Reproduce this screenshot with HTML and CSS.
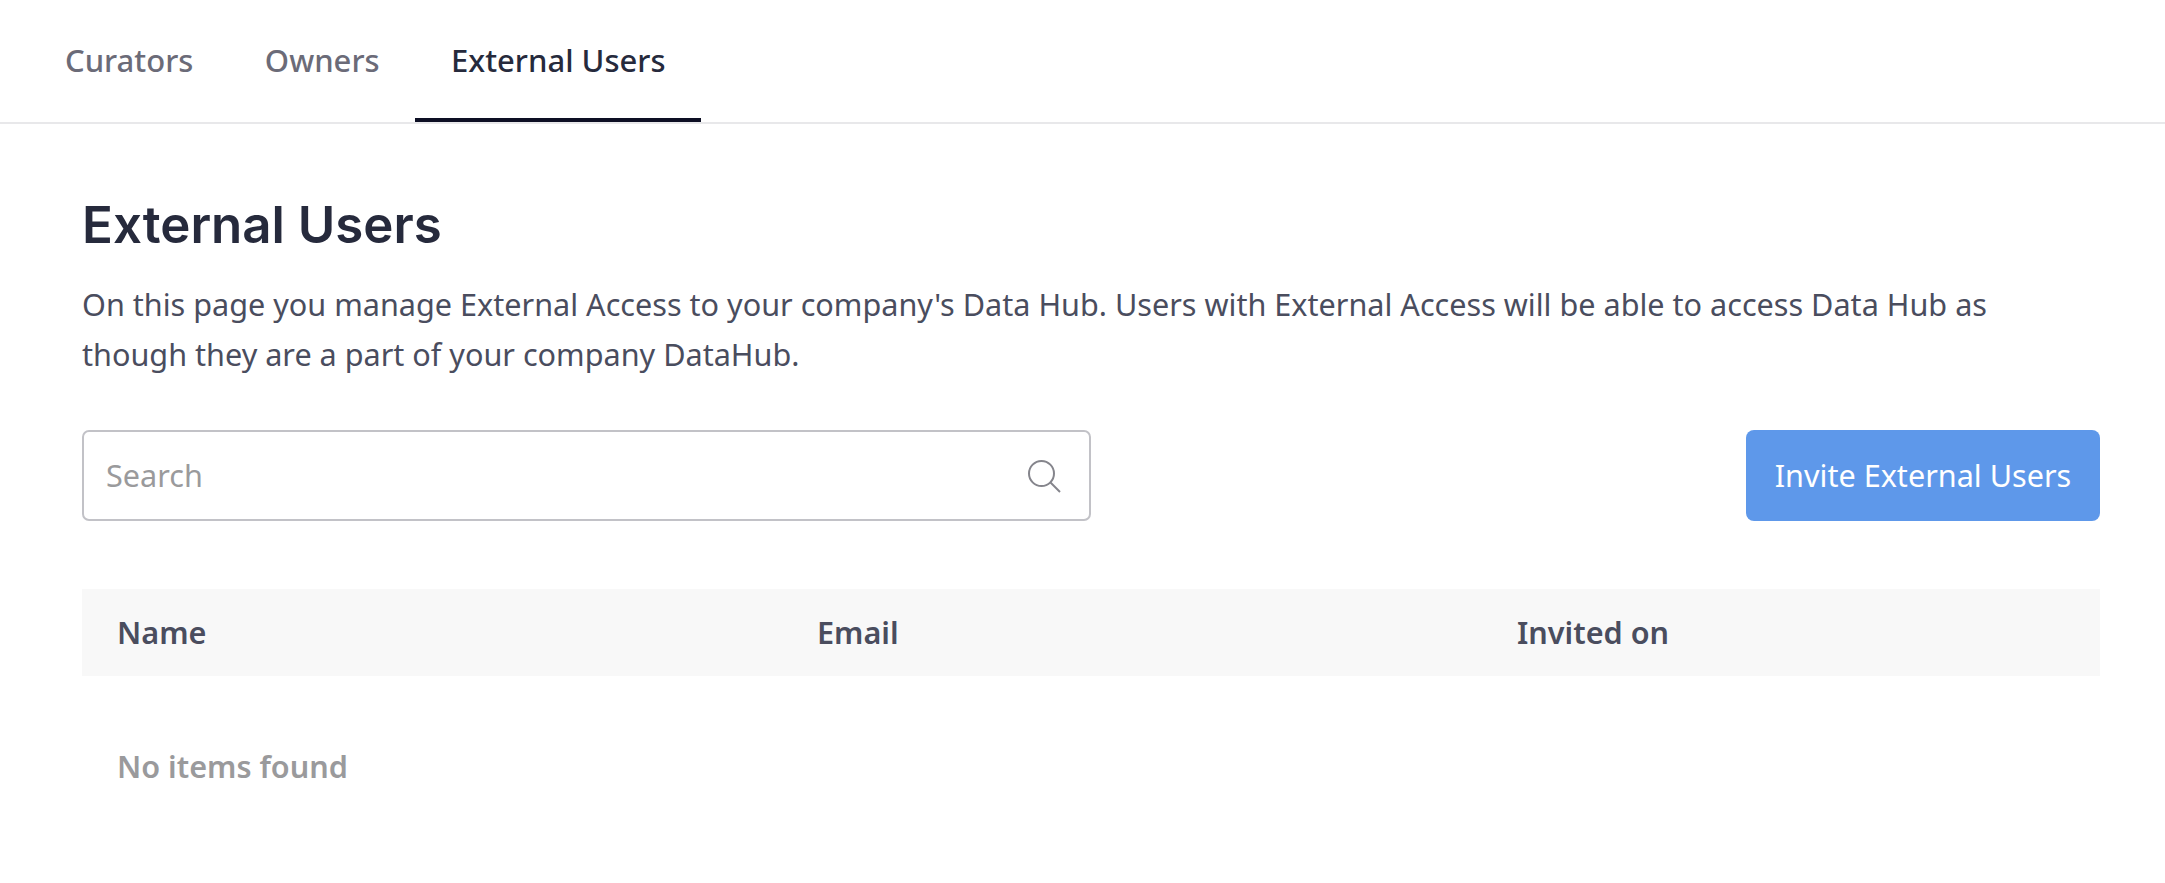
FILE: index.html
```html
<!DOCTYPE html>
<html lang="en">
<head>
   <meta charset="UTF-8">
   <meta name="viewport" content="width=device-width, initial-scale=1.0">
   <title>External Users</title>
   <link rel="stylesheet" href="styles.css">
</head>
<body>
   <!-- Tabs -->
   <nav class="tabs">
       <a class="tab">Curators</a>
       <a class="tab">Owners</a>
       <a class="tab active">External Users</a>
   </nav>
   <main class="content">
       <h1 class="title">External Users</h1>
       <p class="intro">On this page you manage External Access to your company's Data Hub. Users with External Access will be able to access Data Hub as though they are a part of your company DataHub.</p>
       <!-- Search and invite button -->
       <div class="toolbar">
           <div class="search">
               <span class="search-text">Search</span>
               <svg class="search-icon" viewBox="0 0 36 36" fill="none" stroke="#85858c" stroke-width="2">
                   <circle cx="15.5" cy="15.5" r="12.5"/>
                   <path d="M24.5 24.5L34 34"/>
               </svg>
           </div>
           <button class="invite">Invite External Users</button>
       </div>
       <!-- Table -->
       <div class="table-head">
           <div>Name</div>
           <div>Email</div>
           <div>Invited on</div>
       </div>
       <div class="empty">No items found</div>
   </main>
</body>
</html>
```

FILE: styles.css
```css
body {
    margin: 0;
    background-color: #fff;
    font-family: 'Noto Sans', sans-serif;
}

/* tabs across the top */
.tabs {
    display: flex;
    height: 122px;
    padding-left: 29px;
    border-bottom: 2px solid #e8e8ea;
}

.tab {
    padding: 40px 36px 0;
    margin-right: -0.5px;
    font-size: 31px;
    line-height: 40px;
    font-weight: 500;
    color: #6b6b78;
}

.tab.active {
    color: #262a3c;
    border-bottom: 4px solid #0d0f24;
    height: 78px;
}

.content {
    padding: 0 65px 0 82px;
}

.title {
    margin: 73px 0 0;
    font-family: 'Inter', sans-serif;
    font-size: 51px;
    line-height: 56px;
    font-weight: 600;
    color: #262a3c;
}

.intro {
    max-width: 1960px;
    margin: 26px 0 0;
    font-size: 30.6px;
    line-height: 50px;
    color: #4a4d5e;
}

.toolbar {
    display: flex;
    justify-content: space-between;
    align-items: center;
    margin-top: 51px;
}

.search {
    display: flex;
    justify-content: space-between;
    align-items: center;
    box-sizing: border-box;
    width: 1009px;
    height: 91px;
    padding: 0 27px 0 22px;
    border: 2px solid #c2c2c7;
    border-radius: 7px;
}

.search-text {
    padding-bottom: 2px;
    font-size: 30.6px;
    color: #9a9a9c;
}

.search-icon {
    width: 36px;
    height: 36px;
}

.invite {
    width: 354px;
    height: 91px;
    padding: 0 0 2px;
    border: none;
    border-radius: 8px;
    background-color: #5e98ea;
    color: #fff;
    font-family: 'Noto Sans', sans-serif;
    font-size: 30.6px;
}

.table-head {
    display: grid;
    grid-template-columns: 700px 700px 1fr;
    align-items: center;
    box-sizing: border-box;
    height: 87px;
    margin-top: 68px;
    padding: 0 0 2px 35px;
    background-color: #f8f8f8;
    font-size: 30.6px;
    font-weight: 600;
    color: #4a4d5e;
}

.empty {
    margin-top: 70px;
    padding-left: 35px;
    font-size: 30.6px;
    line-height: 40px;
    font-weight: 600;
    color: #9a9a9c;
}
```
